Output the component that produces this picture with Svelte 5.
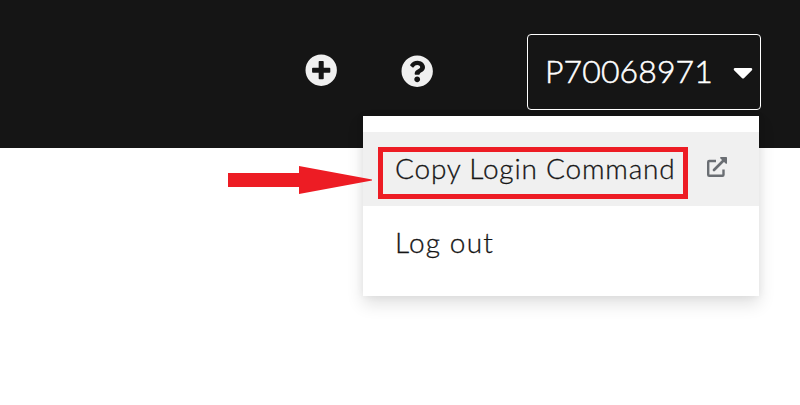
<script>
  const user = 'P70068971';
</script>

<div class="page">
  <header>
    <button class="icon add" aria-label="Add">
      <svg viewBox="0 0 512 512" width="32.4" height="32.4"><path fill-rule="evenodd" d="M256 8a248 248 0 1 0 0 496a248 248 0 1 0 0-496zM400 284c0 6.600-5.400 12-12 12h-92v92c0 6.600-5.400 12-12 12h-56c-6.600 0-12-5.400-12-12v-92h-92c-6.600 0-12-5.400-12-12v-56c0-6.600 5.400-12 12-12h92v-92c0-6.600 5.400-12 12-12h56c6.600 0 12 5.400 12 12v92h92c6.600 0 12 5.400 12 12z" /></svg>
    </button>
    <button class="icon help" aria-label="Help">
      <svg viewBox="0 0 512 512" width="32.4" height="32.4"><path d="M504 256c0 136.997-111.043 248-248 248S8 392.997 8 256C8 119.083 119.043 8 256 8s248 111.083 248 248zM262.655 90c-54.497 0-89.255 22.957-116.549 63.758-3.536 5.286-2.353 12.415 2.715 16.258l34.699 26.310c5.205 3.947 12.621 3.008 16.665-2.122 17.864-22.658 30.113-35.797 57.303-35.797 20.429 0 45.698 13.148 45.698 32.958 0 14.976-12.363 22.667-32.534 33.976C247.128 238.528 216 254.941 216 296v4c0 6.627 5.373 12 12 12h56c6.627 0 12-5.373 12-12v-1.333c0-28.462 83.186-29.647 83.186-106.667 0-58.002-60.165-102-116.531-102zM256 338c-25.365 0-46 20.635-46 46 0 25.364 20.635 46 46 46s46-20.636 46-46c0-25.365-20.635-46-46-46z" /></svg>
    </button>
    <div class="user">
      <button class="toggle">
        <span class="name">{user}</span>
        <svg class="caret" viewBox="0 0 320 512" width="20" height="32"><path d="M31.300 192h257.300c17.800 0 26.700 21.500 14.100 34.100L174.700 354.700c-7.800 7.800-20.500 7.800-28.300 0L17.200 226.100C4.600 213.500 13.500 192 31.300 192z" /></svg>
      </button>
      <div class="menu">
        <div class="item active">
          <span class="copy">Copy Login Command</span>
          <svg class="external" viewBox="0 0 20 20" width="20" height="20">
            <path d="M9 4H2.200Q1.200 4 1.200 5V17.800Q1.200 18.800 2.200 18.800H15.500Q16.500 18.800 16.500 17.800V12.500" fill="none" stroke="#6a6e73" stroke-width="2.400" />
            <path d="M7 13L17 3" stroke="#6a6e73" stroke-width="2.700" stroke-linecap="round" />
            <path d="M13.500 0H19.300Q20 0 20 .7V6.500Q19.400 7.200 18.600 6.500L13.500 1.400Q12.800 .5 13.500 0Z" fill="#6a6e73" />
          </svg>
          <div class="highlight"></div>
        </div>
        <div class="item"><span class="logout">Log out</span></div>
      </div>
    </div>
  </header>
  <svg class="pointer" viewBox="0 0 144 28" width="144" height="28"><path d="M0 7H71V0L144 13.500V14.500L71 28V21H0Z" fill="#ed1c24" /></svg>
</div>

<style>
  :global(body) { background: #fff; }
  .page { position: relative; height: 405px; overflow: hidden; font-family: Lato, "Open Sans", sans-serif; font-weight: 300; }
  header { display: flex; align-items: flex-start; box-sizing: border-box; height: 148px; padding: 34px 39px 0 0; justify-content: flex-end; background: #151515; }
  button { border: 0; padding: 0; background: none; color: inherit; font: inherit; }
  .icon { display: flex; flex: none; fill: #f0f0f0; }
  .add { margin: 19.600px 63.600px 0 0; }
  .help { margin: 20.600px 93.800px 0 0; }
  .user { position: relative; flex: none; }
  .toggle { display: flex; align-items: center; justify-content: space-between; box-sizing: border-box; width: 234px; height: 76px; padding: 0 7px 0 17px; border: 1px solid #fff; border-radius: 4px; color: #fff; font-size: 32px; white-space: nowrap; }
  .name { padding-bottom: 3px; letter-spacing: .1px; -webkit-text-stroke: .5px currentColor; }
  .caret { fill: #fff; flex: none; }
  .menu { position: absolute; top: 82px; right: 2px; width: 396px; box-sizing: border-box; padding: 16px 0; background: #fff; box-shadow: 0 8px 16px rgba(3, 3, 3, .12), 0 0 8px rgba(3, 3, 3, .06); }
  .item { position: relative; display: flex; align-items: center; justify-content: space-between; box-sizing: border-box; height: 74px; padding: 0 32px; color: #151515; font-size: 28px; white-space: nowrap; }
  .copy, .logout { padding-bottom: 2px; -webkit-text-stroke: .3px currentColor; }
  .copy { letter-spacing: .8px; }
  .logout { letter-spacing: 1.150px; }
  .active { background: #f0f0f0; }
  .external { flex: none; position: relative; top: -2px; }
  .highlight { position: absolute; left: 15px; top: 15px; width: 310px; height: 52px; box-sizing: border-box; border: 5px solid #ed1c24; }
  .pointer { position: absolute; left: 228px; top: 166px; }
</style>
